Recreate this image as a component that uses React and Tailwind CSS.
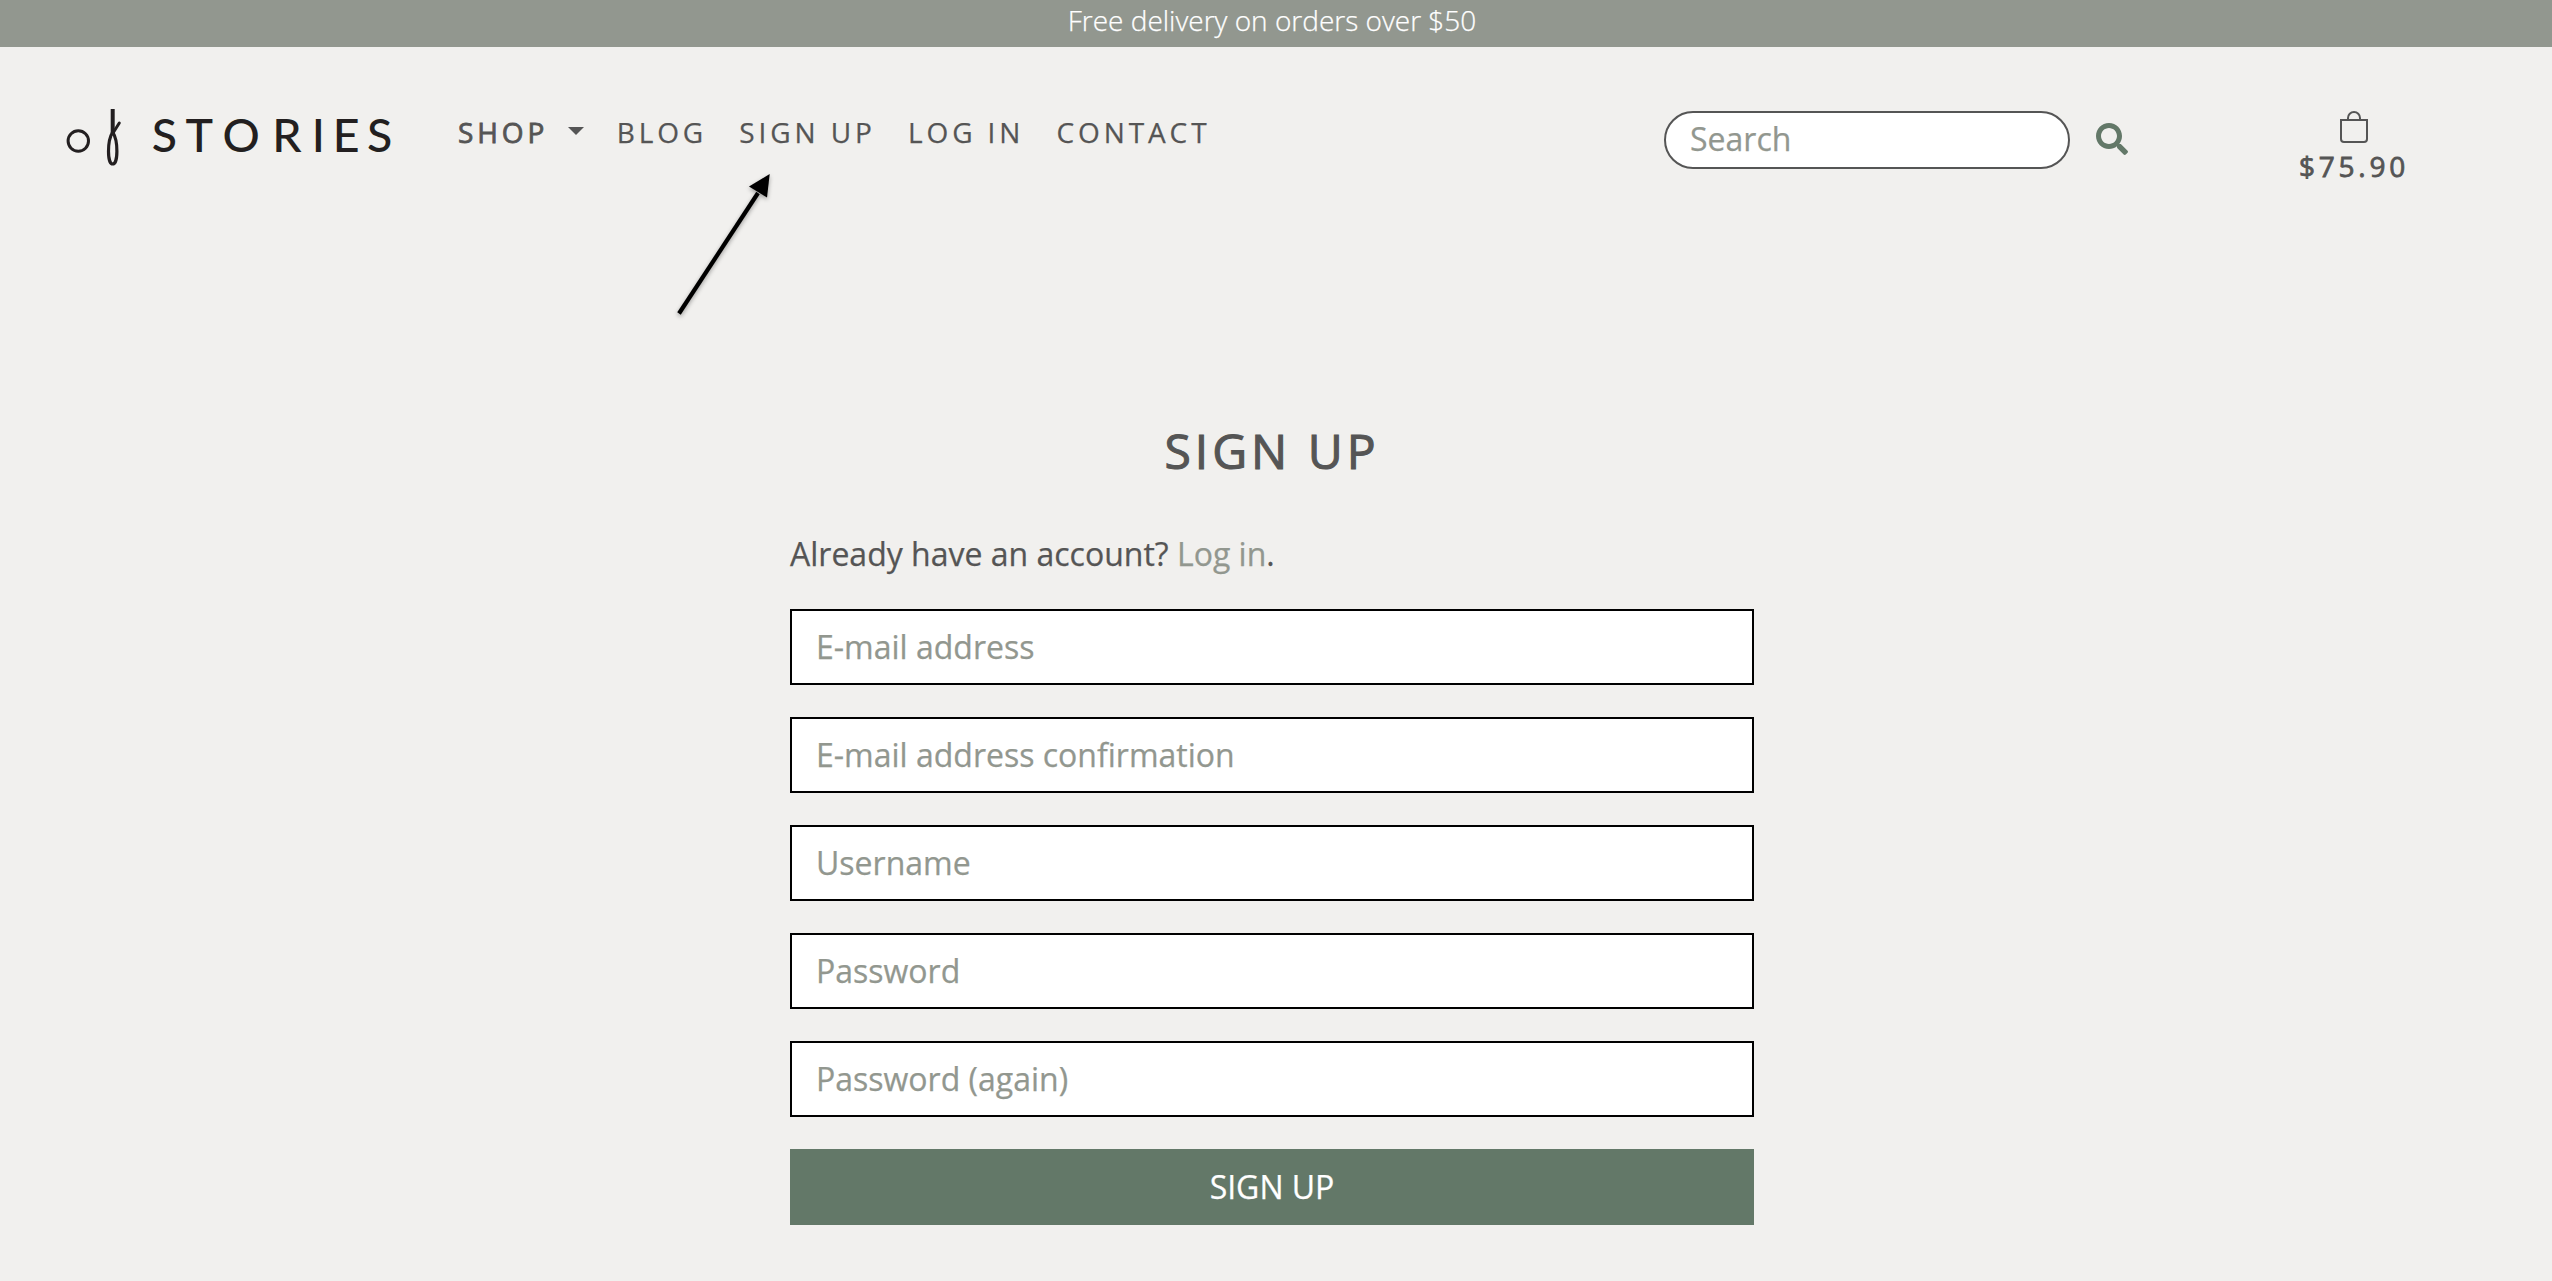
import React from "react";
import { BsBag } from "react-icons/bs";
import { FaSearch } from "react-icons/fa";

const fields = [
  { label: "E-mail address", type: "email" },
  { label: "E-mail address confirmation", type: "email" },
  { label: "Username", type: "text" },
  { label: "Password", type: "password" },
  { label: "Password (again)", type: "password" },
];

function Logo() {
  return (
    <svg className="h-[64px] w-[340px] shrink-0" viewBox="0 0 340 64" role="img" aria-label="of Stories">
      <g fill="none" stroke="#231f20" strokeLinecap="round">
        <circle cx="18.3" cy="36" r="10.2" strokeWidth="3" />
        <path d="M52.7 4V28" strokeWidth="4" strokeLinecap="butt" />
        <path d="M59.3 18L52.7 28.5" strokeWidth="3" />
        <path d="M52.7 27C47 36 47.2 59 52.7 59S58.4 36 52.7 27Z" strokeWidth="3.2" />
      </g>
      <text x="91.7 125.5 162.5 212.2 251.8 272.7 307" y="47.3" fontSize="46.5" fontWeight="500" fill="#231f20" style={{ fontFamily: "Lato, sans-serif" }}>
        STORIES
      </text>
    </svg>
  );
}

export default function App() {
  return (
    <div className="relative h-[1281px] overflow-hidden bg-[#f1f0ee] font-['Open_Sans',sans-serif] text-[#555555] [-webkit-text-stroke-width:0.25px]">
      <div className="flex h-[47px] items-start justify-center bg-[#92978f] pr-[8px] text-[28px] leading-[40px] font-light text-white">
        Free delivery on orders over $50
      </div>

      <header className="flex items-start pt-[58px] pl-[60px]">
        <Logo />
        <nav className="mt-[6px] ml-[58px] flex gap-[32.2px] text-[28px] leading-[42px] tracking-[3.9px] whitespace-nowrap">
          <a className="flex w-[126.5px] pr-px [-webkit-text-stroke-width:0.8px]">
            SHOP
            <span className="mt-[16px] ml-auto h-0 w-0 border-x-8 border-t-8 border-x-transparent border-t-[#555555]" />
          </a>
          <a>BLOG</a>
          <a>SIGN UP</a>
          <a>LOG IN</a>
          <a>CONTACT</a>
        </nav>
        <div className="mt-[6px] mr-[168px] ml-auto flex items-start">
          <input
            className="h-[58px] w-[406px] rounded-full border-2 border-[#555555] bg-white px-[24px] pb-[3px] text-[32px] leading-[48px] placeholder:text-[#92978f]"
            placeholder="Search"
          />
          <FaSearch className="mt-[12px] ml-[26px] size-[32px] text-[#637868]" />
        </div>
        <div className="mt-[6px] mr-[140px] flex w-[116px] flex-col items-center">
          <BsBag className="size-8" />
          <span className="mt-[2px] text-[28px] leading-[42px] tracking-[3.8px] [-webkit-text-stroke-width:0.8px]">$75.90</span>
        </div>
      </header>

      <main className="mt-[228px] ml-[790px] flex w-[964px] flex-col">
        <h1 className="text-center text-[48px] leading-[72px] tracking-[4px] [-webkit-text-stroke-width:1.1px]">SIGN UP</h1>
        <p className="mt-[43px] text-[32px] leading-[48px]">
          Already have an account? <a className="text-[#92978f]">Log in</a>.
        </p>
        <form className="mt-[31px] flex flex-col gap-8">
          {fields.map((f) => (
            <input
              key={f.label}
              type={f.type}
              placeholder={f.label}
              className="h-[76px] border-2 border-black bg-white px-[24px] pb-[2px] text-[32px] placeholder:text-[#92978f]"
            />
          ))}
          <button type="button" className="h-[76px] bg-[#637868] text-[32px] text-white">
            SIGN UP
          </button>
        </form>
      </main>

      <svg className="absolute top-[160px] left-[660px] h-[170px] w-[130px] drop-shadow-[0_2px_2px_rgba(0,0,0,0.35)]" viewBox="0 0 130 170">
        <path d="M19 153.5L98 33" stroke="#000" strokeWidth="4.2" />
        <path d="M109.7 14L89 26.5L107 37.5Z" fill="#000" />
      </svg>
    </div>
  );
}
